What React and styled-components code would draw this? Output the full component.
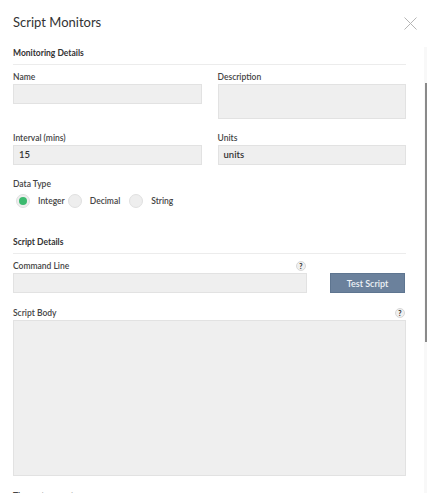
import React from 'react';
import styled, { createGlobalStyle } from 'styled-components';

const GlobalStyle = createGlobalStyle`
html, body {
    margin: 0;
    padding: 0;
    background: #fff;
    font-family: Lato, "Open Sans", sans-serif;
}
* { box-sizing: border-box; }
`;

const App = () => {
    return (
        <Modal>
            <GlobalStyle />
            <Header>
                <Title>Script Monitors</Title>
                <Close aria-label="close">
                    <svg width="13" height="13" viewBox="0 0 13 13">
                        <path d="M0.5 0.5 L12.5 12.5 M12.5 0.5 L0.5 12.5" stroke="#b5b5b5" strokeWidth="1" fill="none" />
                    </svg>
                </Close>
            </Header>

            <BodyRow>
                <Content>
                    <SectionTitle>Monitoring Details</SectionTitle>

                    <Grid>
                        <Field>
                            <Label>Name</Label>
                            <Input />
                        </Field>
                        <Field>
                            <Label>Description</Label>
                            <Input $tall />
                        </Field>
                    </Grid>

                    <Grid>
                        <Field>
                            <Label>Interval (mins)</Label>
                            <Input>15</Input>
                        </Field>
                        <Field>
                            <Label>Units</Label>
                            <Input>units</Input>
                        </Field>
                    </Grid>

                    <Field>
                        <Label>Data Type</Label>
                        <Radios>
                            <RadioOption><Radio $checked /> Integer</RadioOption>
                            <RadioOption $wide><Radio /> Decimal</RadioOption>
                            <RadioOption><Radio /> String</RadioOption>
                        </Radios>
                    </Field>

                    <SectionTitle $spaced>Script Details</SectionTitle>

                    <CommandRow>
                        <Field>
                            <LabelRow>
                                <Label>Command Line</Label>
                                <Help>?</Help>
                            </LabelRow>
                            <Input />
                        </Field>
                        <Button>Test Script</Button>
                    </CommandRow>

                    <Field $gap>
                        <LabelRow>
                            <Label>Script Body</Label>
                            <Help>?</Help>
                        </LabelRow>
                        <Input $script />
                    </Field>

                    <Field $gap>
                        <Label>Timeout <Muted>seconds</Muted></Label>
                    </Field>
                </Content>

                <Track>
                    <Thumb />
                </Track>
            </BodyRow>
        </Modal>
    );
};

export default App;


const Modal = styled.div`
width: 427px;
height: 493px;
overflow: hidden;
background: #fff;
display: flex;
flex-direction: column;
`;

const Header = styled.div`
height: 47px;
flex: none;
display: flex;
align-items: center;
justify-content: space-between;
padding: 0 10px 3px 13px;
`;

const Title = styled.h2`
margin: 0;
font-size: 13px;
font-weight: 400;
color: #333;
`;

const Close = styled.span`
display: flex;
margin-top: 2px;
`;

const BodyRow = styled.div`
flex: 1;
display: flex;
min-height: 0;
`;

const Content = styled.div`
flex: 1;
padding: 0 18px 0 13px;
overflow: hidden;
`;

const Track = styled.div`
width: 3px;
flex: none;
background: #f8f8f8;
padding-top: 36px;
display: flex;
justify-content: flex-end;
`;

const Thumb = styled.div`
width: 2px;
height: 259px;
background: #8a8a8a;
`;

const SectionTitle = styled.div`
font-size: 8.5px;
font-weight: 700;
color: #333;
height: 18px;
line-height: 12px;
padding-bottom: 5px;
border-bottom: 1px solid #ececec;
margin-top: ${p => (p.$spaced ? '28px' : '0')};
margin-bottom: 6px;
`;

const Grid = styled.div`
display: grid;
grid-template-columns: 1fr 1fr;
column-gap: 16px;
margin-bottom: 13px;
`;

const Field = styled.div`
display: flex;
flex-direction: column;
margin-top: ${p => (p.$gap ? '14px' : '0')};
`;

const LabelRow = styled.div`
display: flex;
height: 12px;
justify-content: space-between;
align-items: center;
margin-bottom: 1px;
`;

const Label = styled.div`
font-size: 8.5px;
font-weight: 600;
color: #444;
height: 12px;
line-height: 12px;
margin-bottom: 1px;

${LabelRow} & {
    margin-bottom: 0;
}
`;

const Muted = styled.span`
font-weight: 400;
color: #aaa;
`;

const Input = styled.div`
height: ${p => (p.$script ? '156px' : p.$tall ? '35px' : '20px')};
background: #efefef;
border: 1px solid #e2e2e2;
font-size: 9.5px;
font-weight: 600;
color: #333;
line-height: 18px;
padding: 0 5px;
`;

const Radios = styled.div`
display: flex;
align-items: center;
height: 14px;
margin-top: 3px;
padding-left: 3px;
`;

const RadioOption = styled.label`
display: flex;
align-items: center;
gap: 8px;
margin-right: ${p => (p.$wide ? '9px' : '3px')};
font-size: 8.5px;
font-weight: 600;
color: #444;
`;

const Radio = styled.span`
width: 14px;
height: 14px;
border-radius: 50%;
background: #eee;
border: 1px solid #e0e0e0;
display: flex;
align-items: center;
justify-content: center;

&::after {
    content: '';
    display: ${p => (p.$checked ? 'block' : 'none')};
    width: 8px;
    height: 8px;
    border-radius: 50%;
    background: #3cba6f;
}
`;

const Help = styled.span`
width: 10px;
height: 10px;
border-radius: 50%;
background: #f0f0f0;
border: 1px solid #d8d8d8;
font-size: 7px;
font-weight: 900;
color: #333;
display: flex;
align-items: center;
justify-content: center;
margin-right: 1px;
`;

const CommandRow = styled.div`
display: grid;
grid-template-columns: 294px 1fr;
column-gap: 23px;
align-items: end;
`;

const Button = styled.button`
height: 20px;
width: 75px;
background: #6b819c;
border: 1px solid #5e7590;
color: #eef2f6;
font-family: inherit;
font-size: 9px;
font-weight: 600;
cursor: pointer;
padding: 0;
`;
